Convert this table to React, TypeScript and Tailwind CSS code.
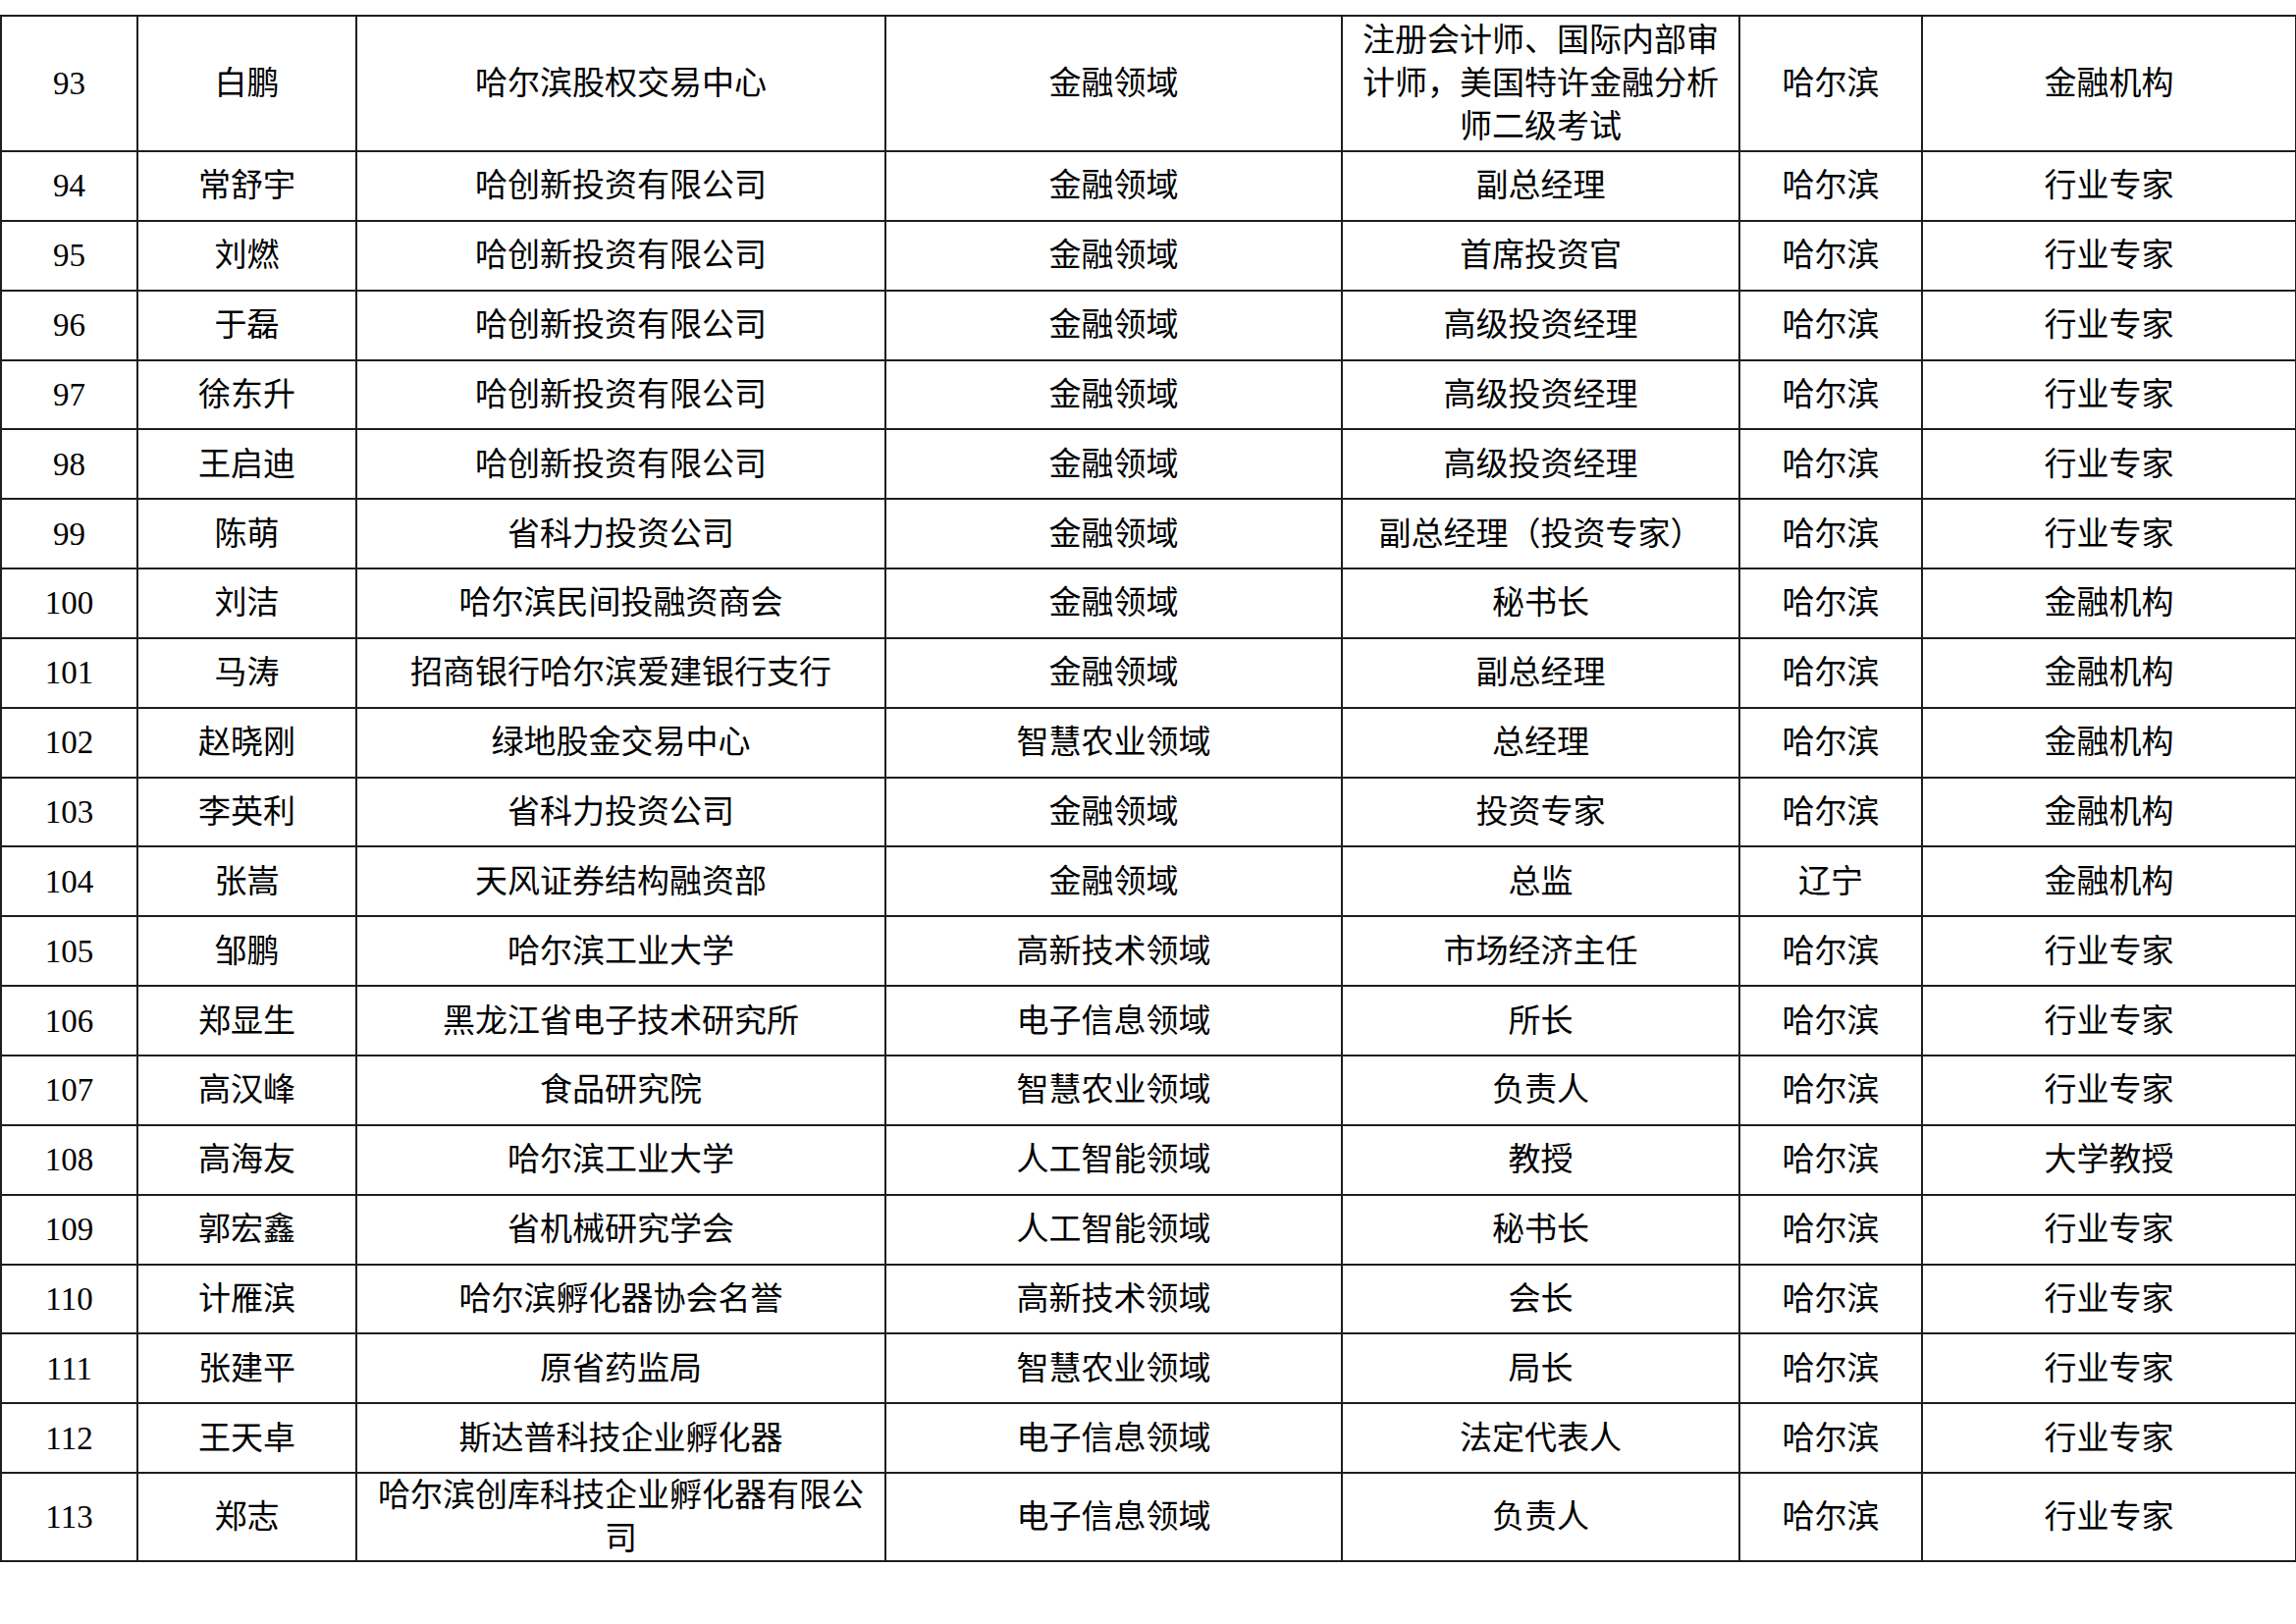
import React from 'react';

type Cell = string | string[];
type Row = { cells: Cell[]; height: string };

const cols = ['w-[139px]', 'w-[223px]', 'w-[539px]', 'w-[465px]', 'w-[405px]', 'w-[186px]', 'w-[381px]'];

const raw: Cell[][] = [
    ['93', '白鹏', '哈尔滨股权交易中心', '金融领域', ['注册会计师、国际内部审', '计师，美国特许金融分析', '师二级考试'], '哈尔滨', '金融机构'],
    ['94', '常舒宇', '哈创新投资有限公司', '金融领域', '副总经理', '哈尔滨', '行业专家'],
    ['95', '刘燃', '哈创新投资有限公司', '金融领域', '首席投资官', '哈尔滨', '行业专家'],
    ['96', '于磊', '哈创新投资有限公司', '金融领域', '高级投资经理', '哈尔滨', '行业专家'],
    ['97', '徐东升', '哈创新投资有限公司', '金融领域', '高级投资经理', '哈尔滨', '行业专家'],
    ['98', '王启迪', '哈创新投资有限公司', '金融领域', '高级投资经理', '哈尔滨', '行业专家'],
    ['99', '陈萌', '省科力投资公司', '金融领域', '副总经理（投资专家）', '哈尔滨', '行业专家'],
    ['100', '刘洁', '哈尔滨民间投融资商会', '金融领域', '秘书长', '哈尔滨', '金融机构'],
    ['101', '马涛', '招商银行哈尔滨爱建银行支行', '金融领域', '副总经理', '哈尔滨', '金融机构'],
    ['102', '赵晓刚', '绿地股金交易中心', '智慧农业领域', '总经理', '哈尔滨', '金融机构'],
    ['103', '李英利', '省科力投资公司', '金融领域', '投资专家', '哈尔滨', '金融机构'],
    ['104', '张嵩', '天风证券结构融资部', '金融领域', '总监', '辽宁', '金融机构'],
    ['105', '邹鹏', '哈尔滨工业大学', '高新技术领域', '市场经济主任', '哈尔滨', '行业专家'],
    ['106', '郑显生', '黑龙江省电子技术研究所', '电子信息领域', '所长', '哈尔滨', '行业专家'],
    ['107', '高汉峰', '食品研究院', '智慧农业领域', '负责人', '哈尔滨', '行业专家'],
    ['108', '高海友', '哈尔滨工业大学', '人工智能领域', '教授', '哈尔滨', '大学教授'],
    ['109', '郭宏鑫', '省机械研究学会', '人工智能领域', '秘书长', '哈尔滨', '行业专家'],
    ['110', '计雁滨', '哈尔滨孵化器协会名誉', '高新技术领域', '会长', '哈尔滨', '行业专家'],
    ['111', '张建平', '原省药监局', '智慧农业领域', '局长', '哈尔滨', '行业专家'],
    ['112', '王天卓', '斯达普科技企业孵化器', '电子信息领域', '法定代表人', '哈尔滨', '行业专家'],
    ['113', '郑志', ['哈尔滨创库科技企业孵化器有限公', '司'], '电子信息领域', '负责人', '哈尔滨', '行业专家'],
];

const rows: Row[] = raw.map((cells, i) => ({
    cells,
    height: i === 0 ? 'h-[138px]' : i === raw.length - 1 ? 'h-[90px]' : 'h-[70.85px]',
}));

function CellText({ value }: { value: Cell }) {
    if (typeof value === 'string') return <>{value}</>;
    return (
        <>
            {value.map((line, i) => (
                <div key={i}>{line}</div>
            ))}
        </>
    );
}

export default function App() {
    return (
        <div
            className="min-h-[1654px] w-[2339px] bg-white pt-[15px] text-black"
            style={{ fontFamily: '"Liberation Serif", "Noto Sans CJK SC", serif' }}
        >
            <table className="w-[2339px] table-fixed border-collapse">
                <colgroup>
                    {cols.map((c, i) => (
                        <col key={i} className={c} />
                    ))}
                </colgroup>
                <tbody>
                    {rows.map((row, ri) => (
                        <tr key={ri} className={row.height}>
                            {row.cells.map((cell, ci) => (
                                <td
                                    key={ci}
                                    className="border-2 border-[#1e1e1e] px-2 py-0 text-center align-middle text-[33px] leading-[44px]"
                                >
                                    <CellText value={cell} />
                                </td>
                            ))}
                        </tr>
                    ))}
                </tbody>
            </table>
        </div>
    );
}
